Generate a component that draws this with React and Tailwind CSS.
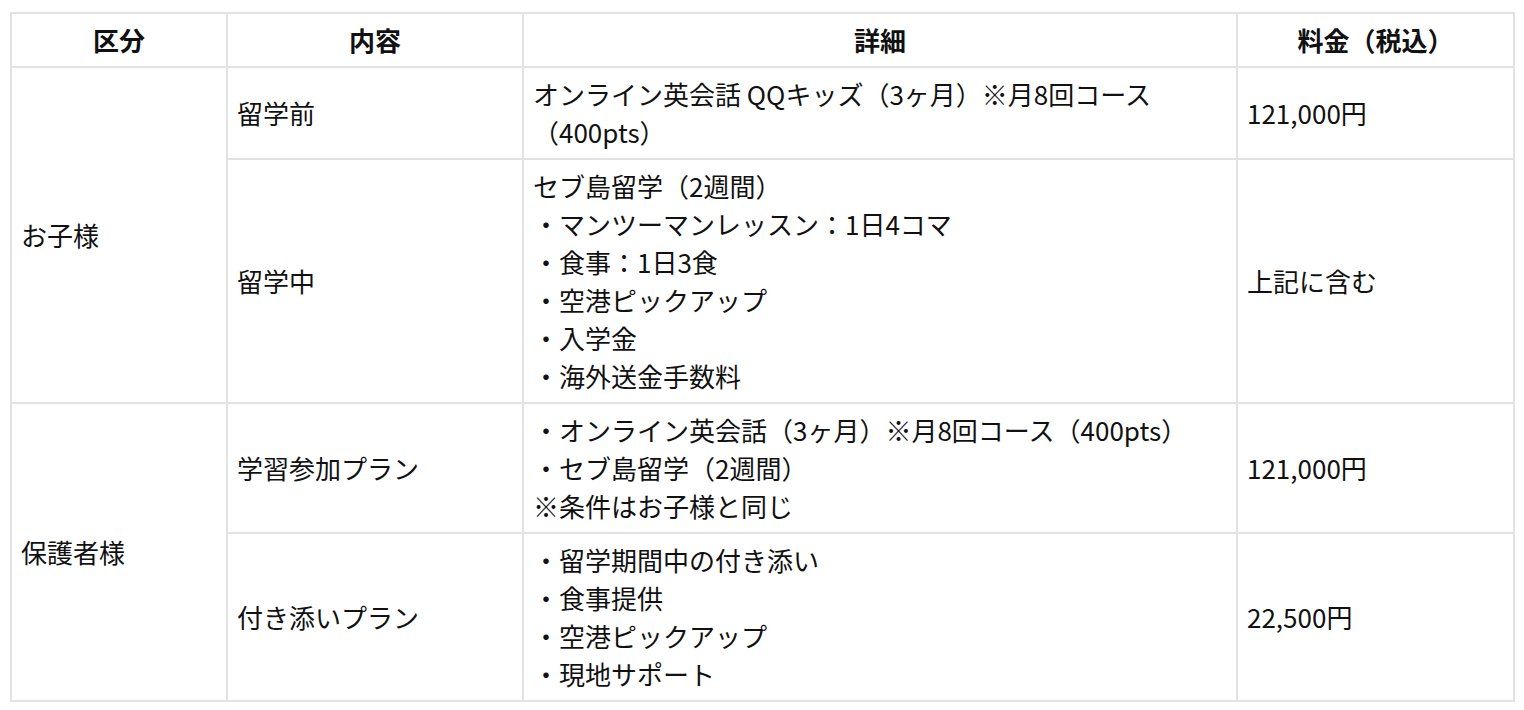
import React from 'react'

const rows = [
  {
    group: 'お子様',
    items: [
      {
        name: '留学前',
        detail: ['オンライン英会話 QQキッズ（3ヶ月）※月8回コース', '（400pts）'],
        price: '121,000円'
      },
      {
        name: '留学中',
        detail: [
          'セブ島留学（2週間）',
          '・マンツーマンレッスン：1日4コマ',
          '・食事：1日3食',
          '・空港ピックアップ',
          '・入学金',
          '・海外送金手数料'
        ],
        price: '上記に含む'
      }
    ]
  },
  {
    group: '保護者様',
    items: [
      {
        name: '学習参加プラン',
        detail: [
          '・オンライン英会話（3ヶ月）※月8回コース（400pts）',
          '・セブ島留学（2週間）',
          '※条件はお子様と同じ'
        ],
        price: '121,000円'
      },
      {
        name: '付き添いプラン',
        detail: ['・留学期間中の付き添い', '・食事提供', '・空港ピックアップ', '・現地サポート'],
        price: '22,500円'
      }
    ]
  }
]

const cell = 'border-2 border-[#e2e2e2] px-[9px] py-[7px] align-middle'

const App = () => {
  return (
    <div
      className="min-h-screen bg-white pt-[12px] pl-[10px] text-[26px] leading-[38px] text-[#111]"
      style={{ fontFamily: '"Noto Sans CJK JP", "Noto Sans", sans-serif' }}
    >
      <table className="w-[1503px] table-fixed border-collapse">
        <colgroup>
          <col className="w-[216px]" />
          <col className="w-[296px]" />
          <col className="w-[714px]" />
          <col className="w-[277px]" />
        </colgroup>
        <thead>
          <tr>
            <th className={`${cell} text-center font-bold`}>区分</th>
            <th className={`${cell} text-center font-bold`}>内容</th>
            <th className={`${cell} text-center font-bold`}>詳細</th>
            <th className={`${cell} text-center font-bold`}>料金（税込）</th>
          </tr>
        </thead>
        <tbody>
          {rows.map((row) =>
            row.items.map((item, i) => (
              <tr key={row.group + i}>
                {i === 0 && (
                  <td rowSpan={row.items.length} className={cell}>
                    {row.group}
                  </td>
                )}
                <td className={cell}>{item.name}</td>
                <td className={cell}>
                  {item.detail.map((line, j) => (
                    <div key={j}>{line}</div>
                  ))}
                </td>
                <td className={cell}>{item.price}</td>
              </tr>
            ))
          )}
        </tbody>
      </table>
    </div>
  )
}

export default App
